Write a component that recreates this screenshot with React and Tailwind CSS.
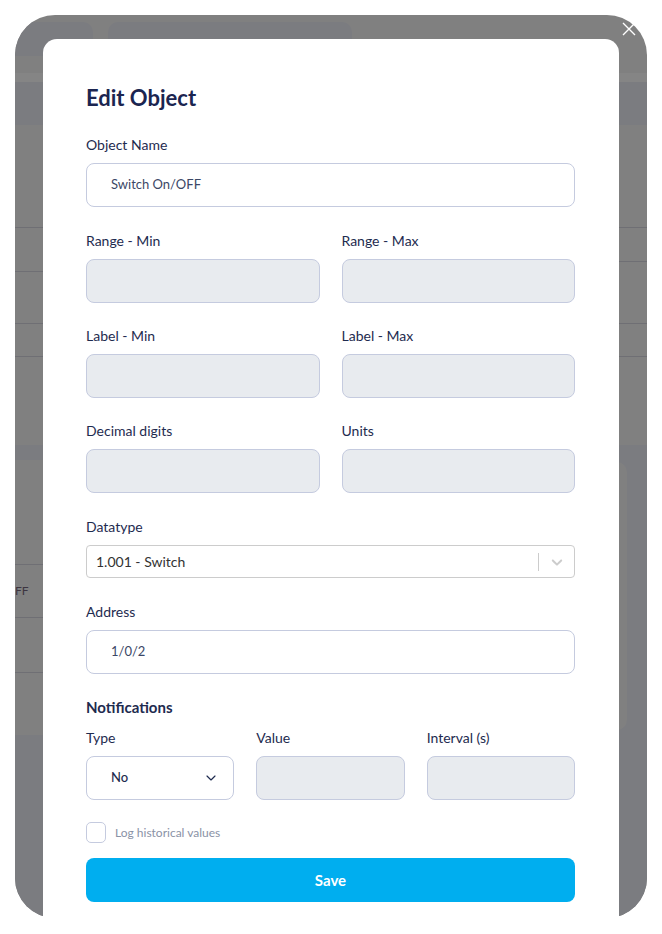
import { ChevronDown } from "lucide-react";

const font = { fontFamily: "Lato, 'Open Sans', sans-serif" };

const labelCls = "mb-2 block text-[14px] leading-5 font-normal text-[#1e2b4f]";
const disabledInput =
  "h-[44px] w-full rounded-lg border border-[#c5cbdf] bg-[#e8ebef]";

function Field({ label, children }) {
  return (
    <div>
      <label className={labelCls}>{label}</label>
      {children}
    </div>
  );
}

function BackdropApp() {
  return (
    <div className="ml-[15px] mt-[15px] h-[903px] w-[632px] overflow-hidden rounded-[40px] bg-[#808080]">
      <div className="flex h-[58px] items-start pt-[7px]">
        <div className="h-[34px] w-[78px] rounded-r-[10px] bg-[#7b7c80]" />
        <div className="ml-[15px] h-[34px] w-[244px] rounded-[10px] bg-[#7b7c80]" />
      </div>
      <div className="h-[9px] bg-[#858585]" />
      <div className="h-[43px] bg-[#7b7c80]" />
      <div className="flex">
        <div className="flex w-1/2 flex-col">
          <div className="h-[103px] border-b border-[#6f6f74]" />
          <div className="h-[44px] border-b border-[#6f6f74]" />
          <div className="h-[52px] border-b border-[#6f6f74]" />
          <div className="h-[33px] border-b border-[#6f6f74]" />
          <div className="h-[88px]" />
          <div className="h-[15px] bg-[#7b7c80]" />
          <div className="h-[105px] border-b border-[#6f6f74]" />
          <div className="flex h-[53px] items-center border-b border-[#6f6f74] text-[12px] text-[#3d3540]">
            FF
          </div>
          <div className="h-[55px] border-b border-[#6f6f74]" />
          <div className="h-[62px]" />
          <div className="h-[183px] bg-[#7b7c80]" />
        </div>
        <div className="flex w-1/2 flex-col">
          <div className="h-[103px] border-b border-[#6f6f74]" />
          <div className="h-[34px] border-b border-[#6f6f74]" />
          <div className="h-[62px] border-b border-[#6f6f74]" />
          <div className="h-[33px] border-b border-[#6f6f74]" />
          <div className="h-[88px]" />
          <div className="flex h-[473px] flex-col bg-[#7b7c80] pt-[17px] pr-[20px]">
            <div className="h-[268px] rounded-r-[10px] bg-[#808080]" />
          </div>
        </div>
      </div>
    </div>
  );
}

export default function App() {
  return (
    <div className="relative h-[934px] w-[662px] overflow-hidden bg-white" style={font}>
      <BackdropApp />

      <button className="absolute left-[622px] top-[22px] h-[14px] w-[14px]" aria-label="Close">
        <svg viewBox="0 0 14 14" className="h-[14px] w-[14px]">
          <path d="M1 1 L13 13 M13 1 L1 13" stroke="white" strokeWidth="1.4" fill="none" />
        </svg>
      </button>

      <div className="absolute left-[43px] top-[39px] h-[920px] w-[576px] rounded-[14px] bg-white pl-[43px] pr-[44px] pt-[43px]">
        <h2 className="text-[22px] leading-8 font-bold text-[#1b2550]">Edit Object</h2>

        <div className="mt-[21px]">
          <Field label="Object Name">
            <div className="flex h-[44px] w-full items-center rounded-lg border border-[#c5cbdf] pl-6 text-[13px] text-[#3b4766]">
              Switch On/OFF
            </div>
          </Field>
        </div>

        <div className="mt-6 grid grid-cols-2 gap-x-[22px] gap-y-[23px]">
          <Field label="Range - Min">
            <div className={disabledInput} />
          </Field>
          <Field label="Range - Max">
            <div className={disabledInput} />
          </Field>
          <Field label="Label - Min">
            <div className={disabledInput} />
          </Field>
          <Field label="Label - Max">
            <div className={disabledInput} />
          </Field>
          <Field label="Decimal digits">
            <div className={disabledInput} />
          </Field>
          <Field label="Units">
            <div className={disabledInput} />
          </Field>
        </div>

        <div className="mt-6">
          <Field label="Datatype">
            <div className="flex h-[33px] w-full items-center rounded border border-[#cccccc]">
              <span className="flex-1 pl-[9px] text-[14px] text-[#333333]">1.001 - Switch</span>
              <span className="h-[18px] w-px bg-[#cccccc]" />
              <span className="flex w-[35px] items-center justify-center">
                <svg viewBox="0 0 20 20" className="h-[18px] w-[18px]" fill="#cccccc">
                  <path d="M4.516 7.548c0.436-0.446 1.043-0.481 1.576 0l3.908 3.747 3.908-3.747c0.533-0.481 1.141-0.446 1.574 0 0.436 0.445 0.408 1.197 0 1.615-0.406 0.418-4.695 4.502-4.695 4.502-0.217 0.223-0.502 0.335-0.787 0.335s-0.57-0.112-0.789-0.335c0 0-4.287-4.084-4.695-4.502s-0.436-1.17 0-1.615z" />
                </svg>
              </span>
            </div>
          </Field>
        </div>

        <div className="mt-6">
          <Field label="Address">
            <div className="flex h-[44px] w-full items-center rounded-lg border border-[#c5cbdf] pl-6 text-[13px] text-[#3b4766]">
              1/0/2
            </div>
          </Field>
        </div>

        <h3 className="mt-[23px] text-[15px] leading-5 font-bold text-[#1e2b4f]">Notifications</h3>

        <div className="mt-[11px] grid grid-cols-3 gap-x-[22px]">
          <Field label="Type">
            <div className="flex h-[44px] w-full items-center justify-between rounded-lg border border-[#c5cbdf] pl-6 pr-[14px] text-[13px] font-medium text-[#1e2b4f]">
              No
              <ChevronDown size={16} strokeWidth={1.75} />
            </div>
          </Field>
          <Field label="Value">
            <div className={disabledInput} />
          </Field>
          <Field label="Interval (s)">
            <div className={disabledInput} />
          </Field>
        </div>

        <label className="mt-[22px] flex h-[21px] items-center gap-[9px]">
          <span className="h-[21px] w-[20px] rounded-[5px] border border-[#c5cbdf]" />
          <span className="text-[12px] text-[#8a92a6]">Log historical values</span>
        </label>

        <button className="mt-[15px] flex h-[44px] w-full items-center justify-center rounded-lg bg-[#00aeef] text-[15px] font-bold text-white">
          Save
        </button>
      </div>
    </div>
  );
}
